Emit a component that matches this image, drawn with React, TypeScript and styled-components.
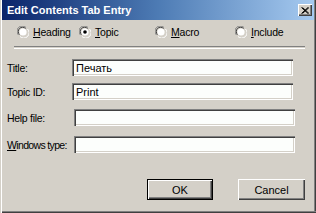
import styled, { createGlobalStyle } from "styled-components";

const GlobalStyle = createGlobalStyle`
  html, body {
    margin: 0;
    padding: 0;
    background: #d4d0c8;
  }
  body {
    font-family: "Liberation Sans", Arial, sans-serif;
  }
`;

const Window = styled.div`
  width: 316px;
  height: 213px;
  box-sizing: border-box;
  padding: 0 2px 2px 2px;
  background: #d4d0c8;
  display: flex;
  flex-direction: column;
  box-shadow:
    inset 1px 0 0 #d4d0c8,
    inset 2px 0 0 #ffffff,
    inset 0 -1px 0 #404040,
    inset 0 -2px 0 #808080,
    inset -1px 0 0 #404040,
    inset -2px 0 0 #808080;
`;

const TitleBar = styled.div`
  height: 20px;
  display: flex;
  align-items: center;
  justify-content: space-between;
  padding: 0 2px 0 5px;
  background: linear-gradient(to right, #0a246a 0%, #4d7bb4 50%, #a6caf0 100%);
`;

const TitleText = styled.span`
  color: #ffffff;
  font-weight: bold;
  font-size: 11px;
`;

const CloseButton = styled.div`
  width: 14px;
  height: 12px;
  background: #d4d0c8;
  display: flex;
  align-items: center;
  justify-content: center;
  box-shadow:
    inset 1px 1px 0 #ffffff,
    inset -1px -1px 0 #404040,
    inset -2px -2px 0 #808080;
`;

const Body = styled.div`
  flex: 1;
  display: flex;
  flex-direction: column;
  font-size: 10.5px;
  color: #000000;
`;

const RadioRow = styled.div`
  display: grid;
  grid-template-columns: 62px 76px 80px 1fr;
  margin: 6px 0 0 15px;
  height: 12px;
`;

const RadioItem = styled.label`
  display: flex;
  align-items: center;
  gap: 4px;
  letter-spacing: -0.2px;
`;

const Separator = styled.div`
  margin: 8px 9px 0 12px;
  height: 1px;
  border-top: 1px solid #808080;
  border-bottom: 1px solid #ffffff;
`;

const Fields = styled.div`
  display: flex;
  flex-direction: column;
  margin-top: 10px;
`;

const FieldRow = styled.div<{ $top: number; $shift: number }>`
  display: grid;
  grid-template-columns: ${p => 65 + p.$shift}px 221px;
  align-items: center;
  margin-top: ${p => p.$top}px;
  padding-left: 5px;
`;

const Label = styled.span<{ $tight?: boolean }>`
  white-space: nowrap;
  font-size: 10.5px;
  letter-spacing: ${p => (p.$tight ? -0.65 : -0.3)}px;
`;

const TextBox = styled.div`
  height: 17px;
  box-sizing: border-box;
  background: #fcfefc;
  padding: 2px 3px 0 4px;
  font-size: 11px;
  line-height: 14px;
  box-shadow:
    inset 1px 1px 0 #808080,
    inset 2px 2px 0 #404040,
    inset -1px -1px 0 #ffffff,
    inset -2px -2px 0 #d4d0c8;
`;

const ButtonRow = styled.div`
  display: flex;
  gap: 25px;
  margin: 26px 0 0 145px;
`;

const Button = styled.div<{ $default?: boolean }>`
  width: ${p => (p.$default ? 66 : 67)}px;
  height: 21px;
  box-sizing: border-box;
  display: flex;
  align-items: center;
  justify-content: center;
  font-size: 11px;
  background: #d4d0c8;
  border: ${p => (p.$default ? "1px solid #000000" : "none")};
  box-shadow: inset 1px 1px 0 #ffffff, inset -1px -1px 0 #404040, inset -2px -2px 0 #808080;
`;

const Key = styled.span`
  text-decoration: underline;
`;

function Radio({ checked }: { checked?: boolean }) {
  return (
    <svg width="12" height="12" viewBox="0 0 12 12">
      <path d="M1.5 9 A5 5 0 0 1 9 1.5" fill="none" stroke="#808080" strokeWidth="1" />
      <path d="M2.5 8.5 A4 4 0 0 1 8.5 2.5" fill="none" stroke="#404040" strokeWidth="1" />
      <circle cx="6" cy="6" r="3.6" fill="#ffffff" />
      <path d="M3 10.5 A5 5 0 0 0 10.5 3" fill="none" stroke="#ffffff" strokeWidth="1" />
      <path d="M3.5 9.5 A4 4 0 0 0 9.5 3.5" fill="none" stroke="#d4d0c8" strokeWidth="1" />
      {checked && <circle cx="6" cy="6" r="1.8" fill="#000000" />}
    </svg>
  );
}

export default function App() {
  return (
    <>
      <GlobalStyle />
      <Window>
        <TitleBar>
          <TitleText>Edit Contents Tab Entry</TitleText>
          <CloseButton>
            <svg width="8" height="7" viewBox="0 0 8 7">
              <path d="M0.5 0.5 L7 6.5 M1.5 0.5 L8 6.5 M7 0.5 L0.5 6.5 M8 0.5 L1.5 6.5" stroke="#000" strokeWidth="1" />
            </svg>
          </CloseButton>
        </TitleBar>
        <Body>
          <RadioRow>
            <RadioItem><Radio /><span><Key>H</Key>eading</span></RadioItem>
            <RadioItem><Radio checked /><span><Key>T</Key>opic</span></RadioItem>
            <RadioItem><Radio /><span><Key>M</Key>acro</span></RadioItem>
            <RadioItem><Radio /><span><Key>I</Key>nclude</span></RadioItem>
          </RadioRow>
          <Separator />
          <Fields>
            <FieldRow $top={0} $shift={0}>
              <Label>Title:</Label>
              <TextBox>Печать</TextBox>
            </FieldRow>
            <FieldRow $top={7} $shift={0}>
              <Label>Topic ID:</Label>
              <TextBox>Print</TextBox>
            </FieldRow>
            <FieldRow $top={9} $shift={2}>
              <Label>Help file:</Label>
              <TextBox />
            </FieldRow>
            <FieldRow $top={10} $shift={2}>
              <Label $tight><Key>W</Key>indows type:</Label>
              <TextBox />
            </FieldRow>
          </Fields>
          <ButtonRow>
            <Button $default>OK</Button>
            <Button>Cancel</Button>
          </ButtonRow>
        </Body>
      </Window>
    </>
  );
}
